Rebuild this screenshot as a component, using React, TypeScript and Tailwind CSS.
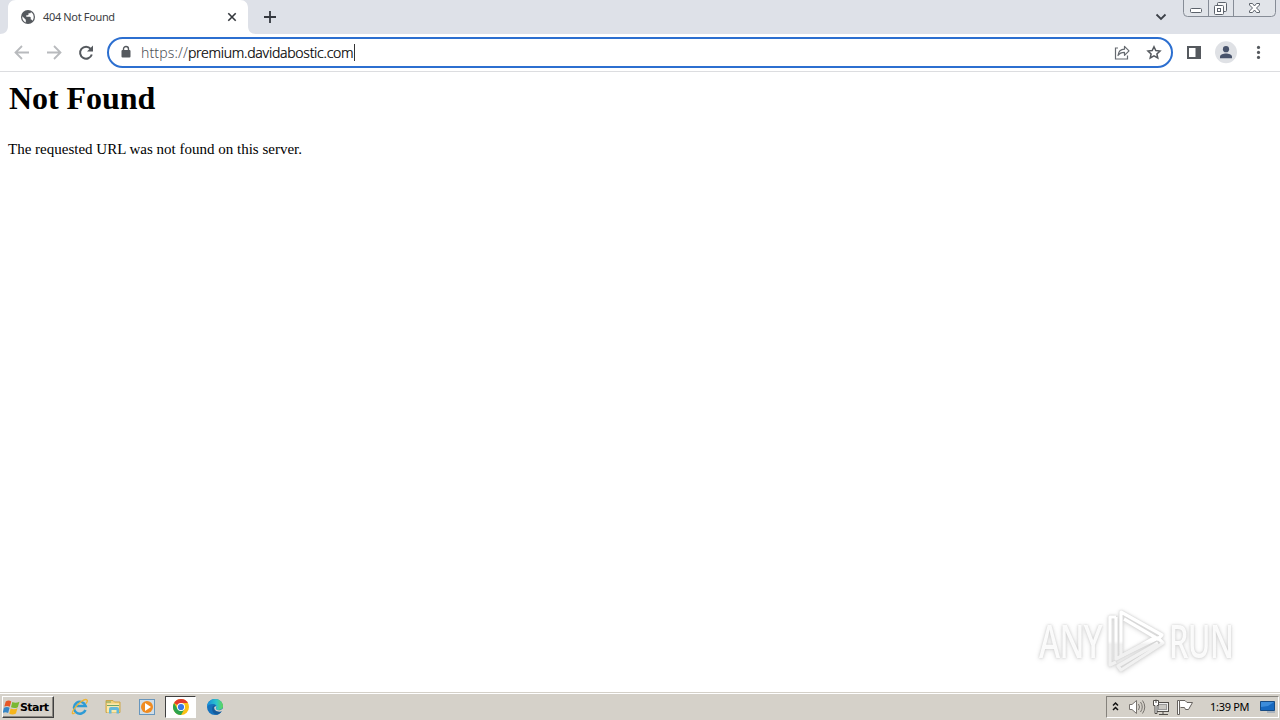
import React from "react";

const stroke = { fill: "none", strokeLinecap: "butt" as const };

function TabStrip() {
  return (
    <div className="flex h-[34px] bg-[#dee1e8]">
      <svg width="256" height="34" className="absolute" aria-hidden="true">
        <path d="M0 34C5 34 8 31 8 26V8C8 3 11 0 16 0H240C245 0 248 3 248 8V26C248 31 251 34 256 34Z" fill="#fff" />
      </svg>
      <div className="relative flex w-[248px] items-center pl-5">
        <svg width="16" height="16" viewBox="0 0 16 16" aria-hidden="true">
          <circle cx="8" cy="8" r="7" fill="#55595e" />
          <path d="M2.3 7.2L5.8 10.7V13.4C3.4 12.5 1.9 10 2.3 7.2ZM9 2.3C11.8 2.8 13.7 5 13.7 8C13.7 9.4 13.2 10.7 12.4 11.7C12 11 11.5 10.5 10.7 10.5V8.6C10.7 8 10.3 7.8 9.8 7.8H6.3V6.3H7.7C8.2 6.3 8.5 6 8.5 5.5V4.3H9.8C10.5 4.3 11 3.7 10.8 3Z" fill="#fff" />
        </svg>
        <span className="ml-[7px] w-[183px] whitespace-nowrap text-[11px] leading-4 tracking-[-0.35px] text-[#3c4043]">404 Not Found</span>
        <svg width="12" height="12" viewBox="0 0 12 12" aria-hidden="true">
          <path d="M2.3 2.3L9.7 9.7M9.7 2.3L2.3 9.7" stroke="#34383d" strokeWidth="1.6" {...stroke} />
        </svg>
      </div>
      <svg width="14" height="14" viewBox="0 0 14 14" className="mt-[10px] ml-[15px]" aria-hidden="true">
        <path d="M7 1V13M1 7H13" stroke="#34383f" strokeWidth="1.8" {...stroke} />
      </svg>
      <div className="flex-1" />
      <svg width="12" height="10" viewBox="0 0 12 10" className="mt-3 mr-[16px]" aria-hidden="true">
        <path d="M1.5 2.5L6 7L10.5 2.5" stroke="#3c4048" strokeWidth="1.8" {...stroke} />
      </svg>
      <svg width="93" height="18" viewBox="0 0 93 18" className="mr-[4px]" aria-hidden="true">
        <path d="M.5 0V12.5Q.5 16.5 4.5 16.5H88.5Q92.5 16.5 92.5 12.5V0" fill="#e1e4e9" stroke="#868c96" />
        <path d="M25.5 0V16M50.5 0V16" stroke="#868c96" />
        <rect x="7.5" y="8.5" width="11" height="4" rx="1" fill="#fff" stroke="#5c626b" />
        <rect x="34.5" y="2.5" width="9" height="9" rx="1" fill="#f5f5f5" stroke="#5c626b" />
        <rect x="31.5" y="5.5" width="9" height="9" rx="1" fill="#fff" stroke="#5c626b" />
        <rect x="34.5" y="8.5" width="3" height="3" fill="none" stroke="#5c626b" />
        <path d="M66.5 3.5H69.5L71.5 6L73.5 3.5H76.5V5L73.5 8L76.5 11V12.5H73.5L71.5 10L69.5 12.5H66.5V11L69.5 8L66.5 5Z" fill="#fff" stroke="#5c626b" />
      </svg>
    </div>
  );
}

function Toolbar() {
  return (
    <div className="flex h-[38px] items-center border-b border-[#dcdde0] bg-white">
      <svg width="107" height="36" viewBox="0 34.5 107 36" aria-hidden="true">
        <g stroke="#b8babd" strokeWidth="1.8" {...stroke}>
          <path d="M29 52H16M22 45.5L15.5 52L22 58.5" />
          <path d="M47 52H60M54 45.5L60.5 52L54 58.5" />
        </g>
        <path d="M90.7 48.3A6 6 0 1 0 91.8 54" stroke="#55595e" strokeWidth="2" {...stroke} />
        <path d="M93 45V51H87Z" fill="#55595e" />
      </svg>
      <div className="flex h-[31px] w-[1066px] items-center rounded-full border-2 border-[#2c6fd0] bg-white pl-3">
        <svg width="10" height="14" viewBox="0 0 10 14" className="-mt-px" aria-hidden="true">
          <path d="M2.5 6V4A2.5 2.5 0 0 1 7.5 4V6" stroke="#55595e" strokeWidth="1.4" {...stroke} />
          <rect x=".5" y="5" width="9" height="7.5" rx="1" fill="#55595e" />
        </svg>
        <div className="ml-[10px] flex h-5 items-center whitespace-nowrap text-[14px] leading-5">
          <span className="w-[47px] font-light tracking-[0.12px] text-[#4d5156]">https://</span>
          <span className="w-[166px] font-light tracking-[-0.27px] text-black [-webkit-text-stroke:0.2px_#000]">premium.davidabostic.com</span>
          <span className="h-[17px] w-px bg-[#333]" />
        </div>
        <div className="flex-1" />
        <svg width="50" height="18" viewBox="1113 43.5 50 18" className="mr-[8px]" aria-hidden="true">
          <path d="M1118 47.5H1115.5V58.5H1127.5V55" stroke="#666a70" strokeWidth="1.2" {...stroke} />
          <path d="M1118 55C1118.5 50.5 1121 48.8 1124.5 48.7V45.8L1129 50.3L1124.5 54.8V51.8C1121.5 51.8 1119.5 52.5 1118 55Z" stroke="#666a70" strokeWidth="1.2" strokeLinejoin="round" {...stroke} />
          <path d="M1154 46.2L1155.8 50.1L1160 50.6L1156.9 53.4L1157.8 57.5L1154 55.4L1150.2 57.5L1151.1 53.4L1148 50.6L1152.2 50.1Z" stroke="#55595e" strokeWidth="1.5" {...stroke} />
        </svg>
      </div>
      <svg width="107" height="36" viewBox="1173 34.8 107 36" aria-hidden="true">
        <path fillRule="evenodd" d="M1187 45.8H1201V58.8H1187ZM1189 47.8V56.8H1195.5V47.8Z" fill="#55595e" />
        <circle cx="1226" cy="52" r="11" fill="#dfe1e5" />
        <circle cx="1226" cy="49" r="3.1" fill="#48536b" />
        <path d="M1220 58V56.5C1220 54 1223.5 53.2 1226 53.2S1232 54 1232 56.5V58Z" fill="#48536b" />
        <g fill="#55595e"><circle cx="1258.5" cy="47.2" r="1.6" /><circle cx="1258.5" cy="52.2" r="1.6" /><circle cx="1258.5" cy="57.2" r="1.6" /></g>
      </svg>
    </div>
  );
}

function Watermark() {
  return (
    <div className="absolute top-[609px] left-[1036px] flex h-[64px] w-[200px] items-center text-[46px] font-medium leading-none text-white/90 [filter:drop-shadow(0_0_1px_#cccccc)_drop-shadow(0_1px_2px_#dddddd)]">
      <div className="w-[70px] pb-[3px] pl-[3px]"><div className="w-max origin-left scale-x-[.7] tracking-[-1px]">ANY</div></div>
      <svg width="60" height="64" viewBox="1107 609 60 64" aria-hidden="true">
        <defs>
          <linearGradient id="mark" x1="0" y1="612" x2="0" y2="670" gradientUnits="userSpaceOnUse">
            <stop offset=".5" stopColor="#fff" /><stop offset=".56" stopColor="#f1f1f1" />
          </linearGradient>
        </defs>
        <g stroke="url(#mark)" strokeWidth="3.2" strokeLinejoin="round" {...stroke}>
          <path d="M1117 617H1111V665L1117 662" />
          <path d="M1122 656V612L1163 635L1159 639L1125 619" />
          <path d="M1117 617V659L1157 637" />
          <path d="M1122 656L1159 638L1164 643L1122 670L1119 666L1159 643" />
        </g>
      </svg>
      <div className="ml-[3px] w-[66px] pb-[3px]"><div className="w-max origin-left scale-x-[.67] tracking-[-1px]">RUN</div></div>
    </div>
  );
}

function WindowsFlag() {
  return (
    <svg width="17" height="17" viewBox="0.5 1 15.5 14" aria-hidden="true">
      <path d="M3 2.5C5 1.4 6.5 1.5 8 2.5L6.7 7.3C5 6.3 3.5 6.4 1.7 7.2Z" fill="#e75827" />
      <path d="M9 3C11 4 13 4 15.5 2.8L14 7.7C11.8 8.8 9.8 8.6 7.8 7.8Z" fill="#79b833" />
      <path d="M1.4 8.2C3.3 7.4 5 7.3 6.5 8.3L5.2 13C3.5 12 2 12 .2 12.8Z" fill="#3786c6" />
      <path d="M7.5 8.8C9.5 9.8 11.5 9.7 13.7 8.7L12.3 13.5C10.2 14.6 8.2 14.6 6.2 13.6Z" fill="#f5b51b" />
    </svg>
  );
}

function Taskbar() {
  return (
    <div className="flex h-[28px] items-center border-t border-[#d4d0c8] bg-[#d5d1c9] shadow-[inset_0_1px_0_#fff]">
      <div className="mt-px ml-[2px] flex h-[22px] w-[52px] items-center border border-t-white border-r-[#404040] border-b-[#404040] border-l-white shadow-[inset_-1px_-1px_0_#8a8781]">
        <WindowsFlag />
        <span className="mt-px font-['DejaVu_Sans',sans-serif] text-[11px] font-bold leading-4 tracking-[-0.55px] text-black">Start</span>
      </div>
      <svg width="111" height="24" viewBox="54 695.5 111 24" aria-hidden="true">
        <path d="M85.5 710.5A6 6 0 1 1 85.7 706.5H76" stroke="#2e9bd5" strokeWidth="2.5" {...stroke} />
        <path d="M75 713C72.5 715.5 71 714 74 709.5C78 703.5 85 698.5 87 700.5C87.6 701 87.2 702.5 86 704" stroke="#efb532" strokeWidth="1.3" {...stroke} />
        <path d="M106 701H113L114.5 702.5H120V713H106Z" fill="#f2d178" stroke="#cda74b" />
        <path d="M107 704H119V713H107Z" fill="#fae9ac" />
        <path d="M109 714V709.5Q109 707.5 111 707.5H117Q119 707.5 119 709.5V714H116.5V710.5H111.5V714Z" fill="#62b8da" />
        <path d="M106 702.5H111M107 706H119" stroke="#70a567" strokeWidth="1" />
        <rect x="139.5" y="700" width="15" height="15" fill="#d0dde7" stroke="#6796bd" />
        <circle cx="147" cy="707.5" r="6" fill="#f08b20" />
        <path d="M145 703.5L151 707.5L145 711.5Z" fill="#fff" />
      </svg>
      <div className="mt-px flex h-[22px] w-[31px] items-center justify-center border border-t-[#404040] border-r-white border-b-white border-l-[#404040] bg-white">
        <svg width="16" height="16" viewBox="0 0 16 16" aria-hidden="true">
          <circle cx="8" cy="8" r="8" fill="#fbc116" />
          <path d="M8 8L1.07 4A8 8 0 0 1 14.93 4H8Z" fill="#e33b2e" />
          <path d="M1.07 4A8 8 0 0 0 8 16L11.5 10L8 8L4.5 10Z" fill="#2da44e" />
          <circle cx="8" cy="8" r="4" fill="#fff" /><circle cx="8" cy="8" r="3.1" fill="#3978e7" />
        </svg>
      </div>
      <svg width="18" height="18" viewBox="0 0 18 18" className="ml-[10px]" aria-hidden="true">
        <defs><linearGradient id="edge"><stop stopColor="#168cdc" /><stop offset=".6" stopColor="#2ec5cb" /><stop offset="1" stopColor="#63d853" /></linearGradient></defs>
        <circle cx="9" cy="9" r="8" fill="#1672bd" />
        <path d="M1 9C1 4 5 1 9 1C14 1 17 4.4 17 8C17 11 14.5 12 12 12C9.5 12 9.5 11 10.3 10C11.3 8 9.5 6 7 6C4 6 1.5 7 1 9Z" fill="url(#edge)" />
        <path d="M9.5 7C7 10 9.5 14 16 12.7C14.8 15 12.6 16.3 11 16.7C6.5 16 5 11 7 8Z" fill="#155b9c" />
        <path d="M10.3 8C11 9 9 10.6 10.4 11.6C12 12.7 15 12.5 17 10.5L17 13C12 15 7.5 12.5 8.3 9Z" fill="#d5d1c9" />
      </svg>
      <div className="flex-1" />
      <div className="mt-px mr-[1px] flex h-[22px] w-[173px] items-center border border-t-[#85827c] border-r-white border-b-white border-l-[#85827c]">
        <svg width="92" height="20" viewBox="1107 697 92 20" aria-hidden="true">
          <path d="M1113 705.5L1115.5 703L1118 705.5M1113 710L1115.5 707.5L1118 710" stroke="#111" strokeWidth="1.5" {...stroke} />
          <path d="M1129.5 704.5H1132L1136.5 700.5V713.5L1132 709.5H1129.5Z" fill="#fff" stroke="#77736e" />
          <path d="M1138.5 704Q1140.5 707 1138.5 710M1140.5 702Q1144 707 1140.5 712M1142.5 700.5Q1147 707 1142.5 713.5" stroke="#77736e" {...stroke} />
          <rect x="1156.5" y="702.5" width="12" height="9" fill="#eee" stroke="#514e4a" />
          <rect x="1158.5" y="704.5" width="8" height="5" fill="#c9c7c2" stroke="#999" />
          <path d="M1163 712V714M1159 714.5H1168" stroke="#514e4a" />
          <path d="M1153.5 700.5H1158.5V705.5H1157V713.5H1155V705.5H1153.5Z" fill="#fff" stroke="#514e4a" />
          <path d="M1156 699.5V703" stroke="#514e4a" />
          <path d="M1179.5 700.5H1185L1187 702.5H1192.5L1190.5 706L1188.5 709.5H1185.5L1184.5 707.5H1180.5" fill="#fff" stroke="#67635f" />
          <path d="M1177.5 700.5H1179.5V714.5H1177.5Z" fill="#fff" stroke="#67635f" />
        </svg>
        <span className="ml-[11px] w-[47px] whitespace-nowrap text-[11px] leading-4 tracking-[-0.3px] text-black">1:39 PM</span>
        <svg width="17" height="16" viewBox="0 0 17 16" className="ml-[2px]" aria-hidden="true">
          <path d="M1.5 2.5H15.5V11.5H1.5Z" fill="#1769c0" stroke="#174b83" />
          <path d="M2 3H15L9 7L2 8Z" fill="#3c8cda" />
          <path d="M8 13H16" stroke="#aab3bd" strokeWidth="2" />
        </svg>
      </div>
    </div>
  );
}

export default function App() {
  return (
    <div className="relative flex h-[720px] w-[1280px] flex-col overflow-hidden bg-white font-['Noto_Sans',sans-serif]">
      <TabStrip />
      <Toolbar />
      <main className="flex-1 px-2 pt-2 font-['Liberation_Serif',serif] text-black">
        <h1 className="pl-px text-[32px] font-bold leading-[37px] tracking-[-0.05px]">Not Found</h1>
        <p className="mt-[23px] text-[15px] leading-[18px]">The requested URL was not found on this server.</p>
      </main>
      <Watermark />
      <Taskbar />
    </div>
  );
}
